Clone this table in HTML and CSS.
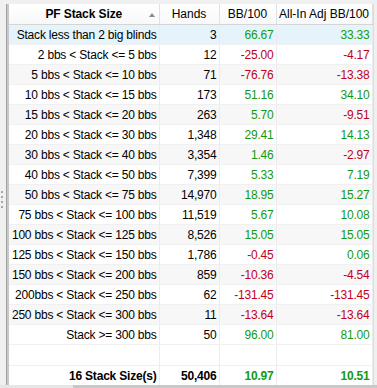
FILE: index.html
```html
<!DOCTYPE html>
<html>
<head>
<meta charset="utf-8">
<link rel="stylesheet" href="styles.css">
</head>
<body>
<div class="window">
  <div class="grip"><span></span><span></span><span></span><span></span></div>
  <div class="panel">
    <table class="grid">
      <colgroup>
        <col class="c1"><col class="c2"><col class="c3"><col class="c4">
      </colgroup>
      <thead>
        <tr>
          <th class="sorted"><span class="ht">PF Stack Size</span><span class="arrow"></span></th>
          <th>Hands</th>
          <th>BB/100</th>
          <th>All-In Adj BB/100</th>
        </tr>
      </thead>
      <tbody>
        <tr class="sel"><td>Stack less than 2 big blinds</td><td>3</td><td class="pos">66.67</td><td class="pos">33.33</td></tr>
        <tr><td>2 bbs &lt; Stack &lt;= 5 bbs</td><td>12</td><td class="neg">-25.00</td><td class="neg">-4.17</td></tr>
        <tr class="alt"><td>5 bbs &lt; Stack &lt;= 10 bbs</td><td>71</td><td class="neg">-76.76</td><td class="neg">-13.38</td></tr>
        <tr><td>10 bbs &lt; Stack &lt;= 15 bbs</td><td>173</td><td class="pos">51.16</td><td class="pos">34.10</td></tr>
        <tr class="alt"><td>15 bbs &lt; Stack &lt;= 20 bbs</td><td>263</td><td class="pos">5.70</td><td class="neg">-9.51</td></tr>
        <tr><td>20 bbs &lt; Stack &lt;= 30 bbs</td><td>1,348</td><td class="pos">29.41</td><td class="pos">14.13</td></tr>
        <tr class="alt"><td>30 bbs &lt; Stack &lt;= 40 bbs</td><td>3,354</td><td class="pos">1.46</td><td class="neg">-2.97</td></tr>
        <tr><td>40 bbs &lt; Stack &lt;= 50 bbs</td><td>7,399</td><td class="pos">5.33</td><td class="pos">7.19</td></tr>
        <tr class="alt"><td>50 bbs &lt; Stack &lt;= 75 bbs</td><td>14,970</td><td class="pos">18.95</td><td class="pos">15.27</td></tr>
        <tr><td>75 bbs &lt; Stack &lt;= 100 bbs</td><td>11,519</td><td class="pos">5.67</td><td class="pos">10.08</td></tr>
        <tr class="alt"><td>100 bbs &lt; Stack &lt;= 125 bbs</td><td>8,526</td><td class="pos">15.05</td><td class="pos">15.05</td></tr>
        <tr><td>125 bbs &lt; Stack &lt;= 150 bbs</td><td>1,786</td><td class="neg">-0.45</td><td class="pos">0.06</td></tr>
        <tr class="alt"><td>150 bbs &lt; Stack &lt;= 200 bbs</td><td>859</td><td class="neg">-10.36</td><td class="neg">-4.54</td></tr>
        <tr><td>200bbs &lt; Stack &lt;= 250 bbs</td><td>62</td><td class="neg">-131.45</td><td class="neg">-131.45</td></tr>
        <tr class="alt"><td>250 bbs &lt; Stack &lt;= 300 bbs</td><td>11</td><td class="neg">-13.64</td><td class="neg">-13.64</td></tr>
        <tr><td>Stack &gt;= 300 bbs</td><td>50</td><td class="pos">96.00</td><td class="pos">81.00</td></tr>
        <tr class="empty"><td></td><td></td><td></td><td></td></tr>
      </tbody>
      <tfoot>
        <tr><td>16 Stack Size(s)</td><td>50,406</td><td class="pos">10.97</td><td class="pos">10.51</td></tr>
      </tfoot>
    </table>
  </div>
  <div class="rightedge"></div>
</div>
<div class="scroll"><div class="thumb"></div></div>
</body>
</html>
```

FILE: styles.css
```css
html, body {
  margin: 0;
  padding: 0;
}
body {
  background: #f0f0f0;
  width: 377px;
  height: 388px;
  overflow: hidden;
  font-family: "Liberation Sans", Arial, sans-serif;
  font-size: 12px;
  color: #000;
}
.window {
  display: flex;
  padding-top: 4px;
  height: 381px;
}
.grip {
  width: 7px;
  display: flex;
  flex-direction: column;
  justify-content: center;
  align-items: flex-start;
  gap: 3px;
  padding-left: 1px;
  box-sizing: border-box;
  padding-top: 10px;
  border-right: 1px solid #a0a0a0;
}
.grip span {
  width: 2px;
  height: 2px;
  background: #a8a8a8;
}
.panel {
  width: 364px;
  border-left: 2px solid #c8c8c8;
  background: #fff;
  overflow: hidden;
}
.rightedge {
  flex: 1;
  border-left: 1px solid #dcdcdc;
}
.grid {
  border-collapse: collapse;
  table-layout: fixed;
  width: 363px;
}
.c1 { width: 150px; }
.c2 { width: 60px; }
.c3 { width: 57px; }
.c4 { width: 96px; }
th {
  height: 20px;
  padding: 0;
  font-weight: normal;
  text-align: center;
  background: linear-gradient(#ffffff, #f7f8fa);
  border-right: 1px solid #dfe1e5;
  border-bottom: 1px solid #d5d5d5;
  white-space: nowrap;
  position: relative;
}
th.sorted .ht {
  font-weight: bold;
  letter-spacing: -0.1px;
}
.arrow {
  position: absolute;
  right: 4px;
  top: 9px;
  width: 0;
  height: 0;
  border-left: 3px solid transparent;
  border-right: 3px solid transparent;
  border-bottom: 4px solid #8a8a8a;
}
td {
  height: 19px;
  padding: 0 2px 0 0;
  text-align: right;
  white-space: nowrap;
  letter-spacing: -0.2px;
  border-right: 1px solid #ececec;
  border-bottom: 1px solid #f0f0f0;
}
tr.alt td { background: #f7f7f7; }
tr.sel td { background: #e5f3fb; }
tr.empty td { height: 20px; }
tfoot td {
  font-weight: bold;
  height: 20px;
  border-top: 1px solid #e0e0e0;
}
.pos { color: #139a13; }
.neg { color: #c0001c; }
.scroll {
  height: 3px;
  background: #c8c8c8;
  display: flex;
}
.thumb {
  width: 73px;
  background: #e6e6e6;
}
```
